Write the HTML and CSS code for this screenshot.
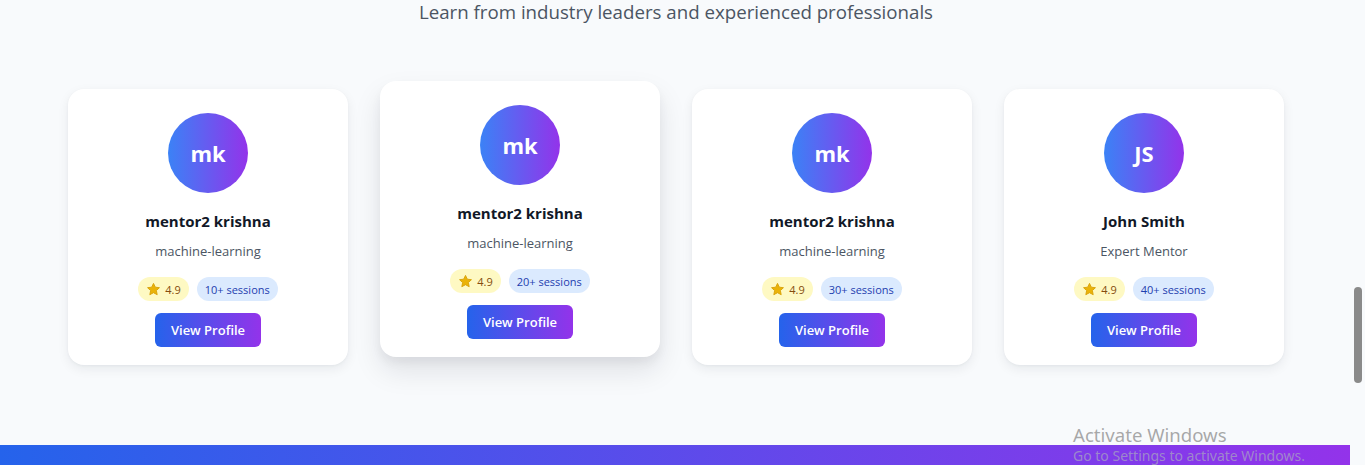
FILE: index.html
```html
<!DOCTYPE html>
<html lang="en">
<head>
<meta charset="utf-8">
<title>Mentors</title>
<link rel="stylesheet" href="styles.css">
</head>
<body>
<div class="window">
  <div class="page">
    <section class="mentors">
      <p class="subtitle">Learn from industry leaders and experienced professionals</p>
      <div class="grid">
        <div class="card">
          <div class="avatar">mk</div>
          <h3 class="name">mentor2 krishna</h3>
          <p class="spec">machine-learning</p>
          <div class="badges">
            <span class="badge rating"><svg class="star" viewBox="0 0 24 24"><path d="M12 2.2l2.9 6.1 6.6.8-4.9 4.6 1.3 6.6L12 17.1l-5.9 3.2 1.3-6.6-4.9-4.6 6.6-.8z"/></svg>4.9</span>
            <span class="badge sessions">10+ sessions</span>
          </div>
          <button class="btn">View Profile</button>
        </div>
        <div class="card raised">
          <div class="avatar">mk</div>
          <h3 class="name">mentor2 krishna</h3>
          <p class="spec">machine-learning</p>
          <div class="badges">
            <span class="badge rating"><svg class="star" viewBox="0 0 24 24"><path d="M12 2.2l2.9 6.1 6.6.8-4.9 4.6 1.3 6.6L12 17.1l-5.9 3.2 1.3-6.6-4.9-4.6 6.6-.8z"/></svg>4.9</span>
            <span class="badge sessions">20+ sessions</span>
          </div>
          <button class="btn">View Profile</button>
        </div>
        <div class="card">
          <div class="avatar">mk</div>
          <h3 class="name">mentor2 krishna</h3>
          <p class="spec">machine-learning</p>
          <div class="badges">
            <span class="badge rating"><svg class="star" viewBox="0 0 24 24"><path d="M12 2.2l2.9 6.1 6.6.8-4.9 4.6 1.3 6.6L12 17.1l-5.9 3.2 1.3-6.6-4.9-4.6 6.6-.8z"/></svg>4.9</span>
            <span class="badge sessions">30+ sessions</span>
          </div>
          <button class="btn">View Profile</button>
        </div>
        <div class="card">
          <div class="avatar">JS</div>
          <h3 class="name">John Smith</h3>
          <p class="spec">Expert Mentor</p>
          <div class="badges">
            <span class="badge rating"><svg class="star" viewBox="0 0 24 24"><path d="M12 2.2l2.9 6.1 6.6.8-4.9 4.6 1.3 6.6L12 17.1l-5.9 3.2 1.3-6.6-4.9-4.6 6.6-.8z"/></svg>4.9</span>
            <span class="badge sessions">40+ sessions</span>
          </div>
          <button class="btn">View Profile</button>
        </div>
      </div>
    </section>
    <div class="bottom-bar"></div>
  </div>
  <div class="scrollbar"><div class="thumb"></div></div>
  <div class="watermark">
    <div class="wm-title">Activate Windows</div>
    <div class="wm-sub">Go to Settings to activate Windows.</div>
  </div>
</div>
</body>
</html>
```

FILE: styles.css
```css
* { box-sizing: border-box; }
html, body { margin: 0; padding: 0; }
body {
  width: 1365px;
  height: 465px;
  overflow: hidden;
  background: #f8fafc;
  font-family: "Open Sans", "Noto Sans", Arial, sans-serif;
}
.window {
  position: relative;
  display: flex;
  height: 465px;
}
.page {
  flex: 1;
  display: flex;
  flex-direction: column;
  background: #f8fafc;
}
.mentors {
  height: 445px;
  padding-left: 2px;
  display: flex;
  flex-direction: column;
  align-items: center;
}
.subtitle {
  margin: -2px 0 0;
  font-size: 18.7px;
  line-height: 28px;
  color: #4b5563;
}
.grid {
  margin-top: 63px;
  display: grid;
  grid-template-columns: repeat(4, 280px);
  gap: 32px;
}
.card {
  background: #fff;
  border-radius: 16px;
  height: 276px;
  padding: 24px 20px 18px;
  display: flex;
  flex-direction: column;
  align-items: center;
  box-shadow: 0 4px 12px rgba(15, 23, 42, 0.07), 0 1px 3px rgba(15, 23, 42, 0.04);
}
.card.raised {
  transform: translateY(-8px);
  box-shadow: 0 14px 28px rgba(15, 23, 42, 0.10), 0 6px 10px rgba(15, 23, 42, 0.05);
}
.avatar {
  width: 80px;
  height: 80px;
  border-radius: 50%;
  background: linear-gradient(90deg, #3b82f6, #9333ea);
  color: #fff;
  font-weight: 700;
  font-size: 22px;
  display: flex;
  align-items: center;
  justify-content: center;
  flex-shrink: 0;
}
.name {
  margin: 16px 0 0;
  font-size: 15px;
  line-height: 24px;
  font-weight: 700;
  color: #111827;
}
.spec {
  margin: 8px 0 0;
  font-size: 13px;
  line-height: 20px;
  color: #4b5563;
}
.badges {
  margin-top: 16px;
  display: flex;
  gap: 8px;
}
.badge {
  height: 24px;
  padding: 0 8px;
  border-radius: 12px;
  font-size: 11px;
  display: inline-flex;
  align-items: center;
}
.rating {
  background: #fef9c3;
  color: #854d0e;
}
.star {
  width: 15px;
  height: 15px;
  fill: #eab308;
  stroke: #d9a20a;
  stroke-width: 1.5;
  stroke-linejoin: round;
  margin-right: 4px;
}
.sessions {
  background: #dbeafe;
  color: #1e40af;
}
.btn {
  margin-top: 12px;
  height: 34px;
  padding: 0 16px;
  border: 0;
  border-radius: 6px;
  background: linear-gradient(90deg, #2563eb, #9333ea);
  color: #fff;
  font-family: inherit;
  font-size: 13px;
  font-weight: 600;
}
.bottom-bar {
  height: 20px;
  background: linear-gradient(90deg, #2563eb, #9333ea);
}
.scrollbar {
  width: 15px;
  background: #f8fafc;
  display: flex;
  flex-direction: column;
  align-items: center;
  padding-top: 287px;
}
.thumb {
  width: 8px;
  height: 96px;
  border-radius: 4px;
  background: #8a8a8a;
}
.watermark {
  position: absolute;
  left: 1073px;
  top: 423px;
  color: rgba(140, 140, 140, 0.75);
  font-family: "Noto Sans", "Open Sans", sans-serif;
}
.wm-title {
  font-size: 18.6px;
  line-height: 24px;
}
.wm-sub {
  font-size: 14px;
  line-height: 18px;
  color: rgba(170, 170, 190, 0.7);
}
```
